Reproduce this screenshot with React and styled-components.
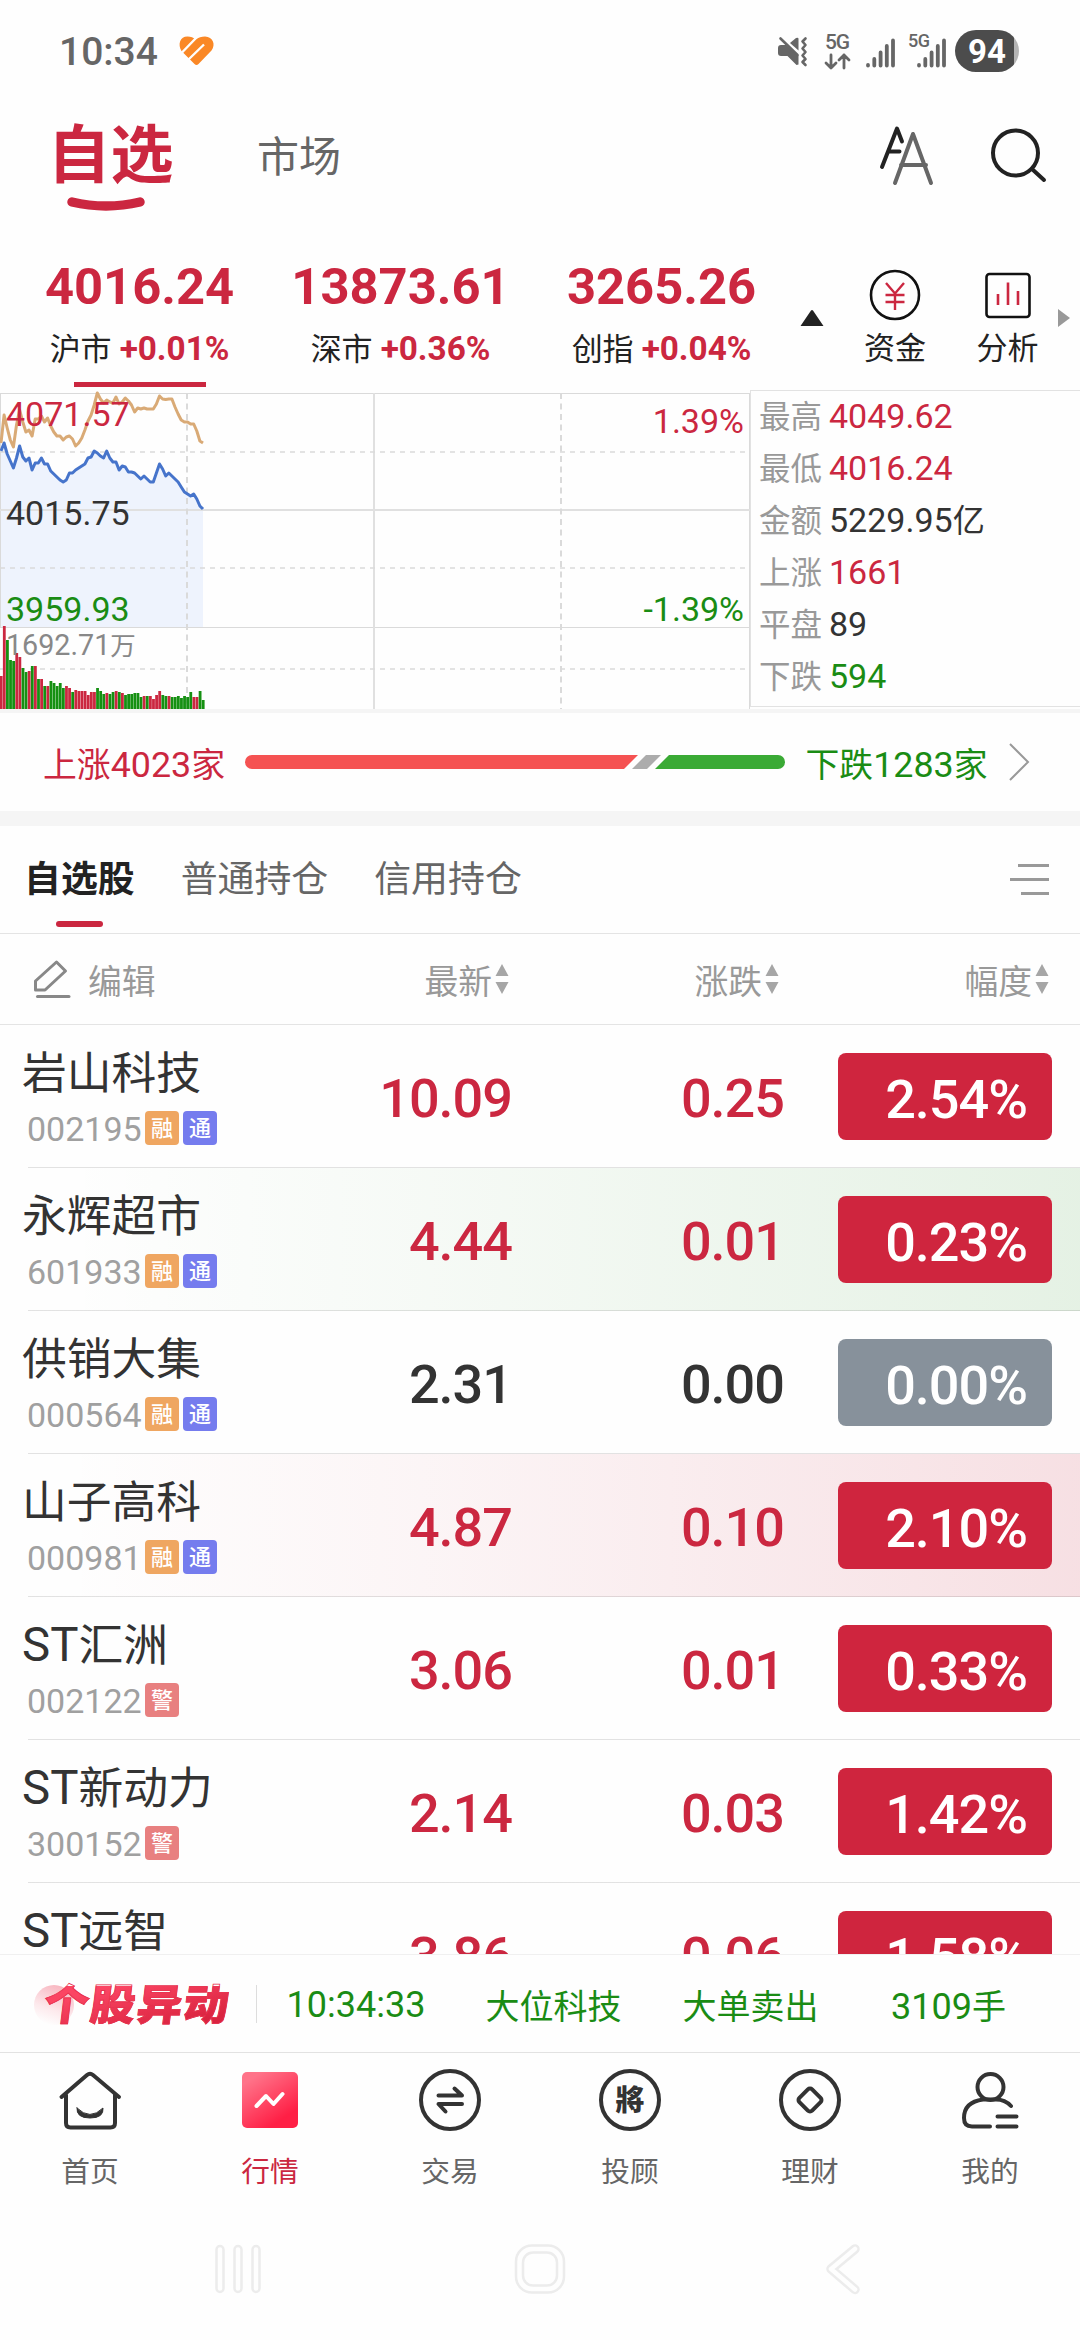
import React from 'react'
import styled, { createGlobalStyle } from 'styled-components'

const RED = '#cb2740'
const GREEN = '#1a8c14'

const GlobalStyle = createGlobalStyle`
  * {
    box-sizing: border-box;
  }
  body {
    margin: 0;
    background: #fefefe;
    font-family: Roboto, 'Noto Sans CJK SC', sans-serif;
    color: #333;
  }
  svg {
    display: block;
    flex: none;
    overflow: visible;
  }
`

const Screen = styled.div`
  width: 1080px;
  height: 2340px;
  display: flex;
  flex-direction: column;
  overflow: hidden;
  background: #fefefe;
`

// Chinese glyphs run slightly smaller than the digits next to them
const Cn = styled.span`
  font-size: 0.945em;
`

/* ---------- status bar ---------- */

const StatusBar = styled.header`
  height: 100px;
  flex: none;
  display: flex;
  align-items: center;
  padding: 1px 61px 0 59px;
`

const Clock = styled.span`
  width: 120px;
  font-size: 39px;
  font-weight: 500;
  line-height: 48px;
  padding-top: 2px;
  color: #666;
`

const StatusIcons = styled.div`
  margin-left: auto;
  display: flex;
  align-items: center;
`

const Battery = styled.span`
  width: 64px;
  height: 42px;
  margin-left: 7px;
  border-radius: 21px;
  background: linear-gradient(90deg, #4c4c4c 59px, #b5b5b5 59px);
  color: #fff;
  font-size: 33px;
  font-weight: 700;
  line-height: 43px;
  text-align: center;
`

const Network = styled.svg`
  margin-left: ${props => props.$gap}px;
`

/* ---------- top tabs ---------- */

const TopBar = styled.nav`
  height: 140px;
  flex: none;
  display: flex;
  padding: 0 33px 0 47px;
`

const MainTab = styled.div`
  width: 127px;
  display: flex;
  flex-direction: column;
  align-items: center;
  font-size: 63px;
  line-height: 90px;
  padding-top: 11px;
  font-weight: 700;
  color: ${RED};
  svg {
    margin: -5px 0 0 -9px;
  }
`

const SideTab = styled.div`
  margin-left: 83px;
  padding-top: 28px;
  font-size: 42px;
  line-height: 60px;
  color: #666;
`

const TopActions = styled.div`
  margin-left: auto;
  padding-top: 25px;
  display: flex;
  gap: 56px;
`

/* ---------- indices ---------- */

const Indices = styled.section`
  height: 150px;
  flex: none;
  display: flex;
  padding-left: 9px;
`

const IndexCell = styled.div`
  width: 261px;
  height: 150px;
  display: flex;
  flex-direction: column;
  align-items: center;
`

const IndexValue = styled.div`
  margin-top: 17px;
  height: 60px;
  line-height: 60px;
  font-size: 50.7px;
  font-weight: 700;
  color: ${RED};
`

const IndexLabel = styled.div`
  display: flex;
  align-items: baseline;
  gap: 8px;
  height: 40px;
  line-height: 40px;
  margin-top: 12px;
  font-size: 31px;
  color: #222;
  b {
    font-size: 33.3px;
    color: ${RED};
  }
`

const IndexMark = styled.div`
  width: 132px;
  height: 5px;
  margin-top: 13px;
  background: ${RED};
`

const Collapse = styled.svg`
  margin: 70px 0 0 8px;
`

const Tool = styled.div`
  width: ${props => props.$width}px;
  padding-top: 29px;
  display: flex;
  flex-direction: column;
  align-items: center;
  font-size: 31px;
  line-height: 40px;
  color: #222;
  svg {
    margin-bottom: 8px;
  }
`

const More = styled.svg`
  margin: 69px 0 0 9px;
`

/* ---------- chart ---------- */

const Market = styled.section`
  height: 323px;
  flex: none;
  display: flex;
  border-bottom: 4px solid #f5f5f5;
`

const Stats = styled.dl`
  margin: 0;
  width: 330px;
  height: 317px;
  border: 1px solid #e2e2e2;
  border-right: 0;
  padding-left: 8px;
`

const Stat = styled.div`
  display: flex;
  align-items: baseline;
  gap: 7px;
  height: 52px;
  line-height: 50px;
  dt {
    font-size: 31.5px;
    color: #999;
  }
  dd {
    margin: 0;
    font-size: 34px;
    color: ${props => props.$color};
  }
`

/* ---------- breadth ---------- */

const Breadth = styled.section`
  height: 113px;
  flex: none;
  display: flex;
  align-items: center;
  padding: 0 51px 0 43px;
  border-bottom: 15px solid #f5f5f5;
  font-size: 35.8px;
  color: ${RED};
`

const BreadthText = styled.span`
  width: ${props => props.$width}px;
  padding-left: ${props => props.$inset || 0}px;
  color: ${props => props.$color};
  white-space: nowrap;
`

/* ---------- watch list ---------- */

const ListTabs = styled.nav`
  height: 108px;
  flex: none;
  display: flex;
  padding: 0 31px 0 24px;
  border-bottom: 1px solid #e4e4e4;
`

const ListTab = styled.div`
  margin-right: 46px;
  padding-top: 26px;
  font-size: 36.9px;
  line-height: 56px;
  font-weight: ${props => (props.$active ? 700 : 400)};
  color: ${props => (props.$active ? '#222' : '#666')};
  &::after {
    content: '';
    display: ${props => (props.$active ? 'block' : 'none')};
    width: 47px;
    height: 6px;
    margin: 13px auto 0;
    border-radius: 3px;
    background: ${RED};
  }
`

const MenuIcon = styled.svg`
  margin: 37px 0 0 auto;
`

const ListHead = styled.div`
  height: 91px;
  flex: none;
  display: grid;
  grid-template-columns: 270px 239px 270px 270px;
  align-items: center;
  border-bottom: 1px solid #e4e4e4;
  font-size: 33.8px;
  color: #999;
`

const HeadCell = styled.div`
  display: flex;
  align-items: center;
  justify-content: flex-end;
  gap: 3px;
`

const EditCell = styled(HeadCell)`
  justify-content: flex-start;
  padding-left: 33px;
  gap: 17px;
`

const List = styled.section`
  height: 929px;
  flex: none;
  overflow: hidden;
`

const flash = {
  up: 'linear-gradient(90deg, rgba(203, 39, 64, 0) 6%, rgba(203, 39, 64, 0.045) 40%, rgba(203, 39, 64, 0.14))',
  down: 'linear-gradient(90deg, rgba(26, 140, 20, 0) 6%, rgba(26, 140, 20, 0.035) 40%, rgba(26, 140, 20, 0.11))',
  none: 'none',
}

const Row = styled.div`
  height: 143px;
  display: grid;
  grid-template-columns: 270px 242px 272px 54px 214px;
  align-items: center;
  background: linear-gradient(rgba(0, 0, 0, 0.11), rgba(0, 0, 0, 0.11)) 28px 142px / 1052px 1px no-repeat,
    ${props => flash[props.$flash]};
`

const Stock = styled.div`
  padding-left: 22px;
  height: 143px;
`

const StockName = styled.div`
  margin-top: 18px;
  height: 60px;
  line-height: 60px;
  font-size: 47.4px;
  white-space: nowrap;
  color: #333;
`

const StockCode = styled.div`
  display: flex;
  align-items: center;
  height: 34px;
  margin-top: 8px;
  padding-left: 5px;
  font-size: 34px;
  color: #a0a0a0;
  span {
    width: 118px;
    padding-top: 2px;
  }
`

const tagColors = { 融: '#efa661', 通: '#757cee', 警: '#e88080' }

const Tag = styled.i`
  width: 34px;
  height: 34px;
  margin-right: 4px;
  border-radius: 4px;
  background: ${props => tagColors[props.$kind]};
  color: #fff;
  font-style: normal;
  font-weight: 500;
  font-size: 22px;
  line-height: 35px;
  text-align: center;
`

const Figure = styled.div`
  text-align: right;
  font-size: 54px;
  font-weight: 500;
  letter-spacing: -1px;
  line-height: 60px;
  padding-top: 5px;
  color: ${props => (props.$flat ? '#333' : RED)};
`

const Percent = styled.div`
  grid-column: 5;
  height: 87px;
  padding-right: 25px;
  border-radius: 8px;
  background: ${props => (props.$flat ? '#87919b' : '#cf253e')};
  color: #fff;
  font-size: 54px;
  font-weight: 500;
  letter-spacing: -1px;
  line-height: 93px;
  text-align: right;
`

/* ---------- ticker ---------- */

const Ticker = styled.section`
  height: 99px;
  flex: none;
  display: flex;
  align-items: center;
  border-top: 1px solid #f0f0f0;
  border-bottom: 1px solid #e2e2e2;
  font-size: 36px;
  color: ${GREEN};
`

const TickerLogo = styled.div`
  position: relative;
  width: 223px;
  height: 38px;
  padding-left: 10px;
  margin-left: 34px;
  border-right: 1px solid #ddd;
  &::before {
    content: '';
    position: absolute;
    left: 0;
    top: 0;
    width: 40px;
    height: 40px;
    border-radius: 50%;
    background: linear-gradient(200deg, #f8b6c0 10%, rgba(252, 225, 229, 0.7) 60%, rgba(255, 255, 255, 0) 90%);
  }
`

const LogoText = styled.span`
  position: relative;
  display: block;
  width: 190px;
  font-size: 45px;
  font-weight: 900;
  line-height: 42px;
  letter-spacing: 1.6px;
  white-space: nowrap;
  transform: skewX(-7deg) scaleY(0.95);
  color: transparent;
  background: linear-gradient(165deg, #fb4563 20%, #d9233f 85%);
  background-clip: text;
  -webkit-background-clip: text;
  -webkit-text-stroke: 0.8px #e6304d;
`

const TickerItem = styled.span`
  width: ${props => props.$width}px;
  padding-top: 2px;
  text-align: center;
`

/* ---------- bottom ---------- */

const TabBar = styled.nav`
  height: 147px;
  flex: none;
  display: grid;
  grid-template-columns: repeat(6, 180px);
`

const TabItem = styled.div`
  display: flex;
  flex-direction: column;
  align-items: center;
  padding-top: 16px;
  font-size: 28.7px;
  line-height: 40px;
  color: ${props => (props.$active ? RED : '#666')};
  svg {
    margin-bottom: 21px;
  }
`

const SystemBar = styled.footer`
  flex: 1;
  display: flex;
  justify-content: space-between;
  padding: 44px 219px 0 214px;
  svg:nth-child(2) {
    margin-right: 7px;
  }
`

/* ---------- data ---------- */

// one sample every three pixels, y measured from the top of the chart
const price = [
  58, 50, 61, 68, 75, 65, 53, 64, 68, 65, 77, 70, 70, 65, 71, 71, 78, 81, 84, 87, 89, 87, 80, 80, 77, 75, 73, 71, 65,
  64, 58, 60, 63, 65, 58, 65, 69, 69, 77, 73, 74, 79, 79, 80, 83, 86, 83, 86, 89, 89, 80, 71, 76, 83, 80, 83, 86, 89,
  94, 99, 101, 103, 101, 106, 113, 116,
]
const average = [
  50, 22, 35, 47, 54, 32, 17, 29, 39, 37, 43, 26, 26, 23, 29, 25, 33, 39, 43, 43, 47, 44, 43, 46, 53, 50, 45, 37, 28,
  22, 12, 0, 6, 10, 7, 9, 10, 4, 11, 9, 5, 8, 12, 19, 15, 16, 15, 16, 16, 16, 11, 3, 6, 6.5, 6, 6, 14, 21, 27, 29, 29,
  31, 31, 38, 48, 50,
]
const volume = [
  33, 83, 69, 49, 48, 56, 52, 41, 37, 38, 43, 43, 30, 30, 23, 23, 28, 26, 23, 26, 21, 23, 21, 17, 19, 18, 18, 18, 14,
  17, 17, 21, 18, 15, 16, 15, 17, 18, 17, 16, 14, 15, 15, 16, 16, 12, 13, 13, 13, 10, 14, 18, 14, 13, 13, 12, 12, 13,
  11, 13, 12, 17, 12, 12, 18, 9,
]
const volumeSide = 'rrgggrrggrgrgrgrggggg' + 'rrgrrrrrrrgggrggrgrggggggrgrrrrggrgggggggrrgg'

const px = i => 1 + (i * 202) / (price.length - 1)
const toPoints = data => data.map((y, i) => `${px(i).toFixed(1)},${y + 3}`).join(' ')

const stats = [
  ['最高', '4049.62', RED],
  ['最低', '4016.24', RED],
  ['金额', '5229.95', '#333', '亿'],
  ['上涨', '1661', RED],
  ['平盘', '89', '#333'],
  ['下跌', '594', GREEN],
]

const indices = [
  ['4016.24', '沪市', '+0.01%'],
  ['13873.61', '深市', '+0.36%'],
  ['3265.26', '创指', '+0.04%'],
]

const stocks = [
  { name: '岩山科技', code: '002195', tags: '融通', last: '10.09', diff: '0.25', pct: '2.54%' },
  { name: '永辉超市', code: '601933', tags: '融通', last: '4.44', diff: '0.01', pct: '0.23%', flash: 'down' },
  { name: '供销大集', code: '000564', tags: '融通', last: '2.31', diff: '0.00', pct: '0.00%', flat: true },
  { name: '山子高科', code: '000981', tags: '融通', last: '4.87', diff: '0.10', pct: '2.10%', flash: 'up' },
  { st: true, name: '汇洲', code: '002122', tags: '警', last: '3.06', diff: '0.01', pct: '0.33%' },
  { st: true, name: '新动力', code: '300152', tags: '警', last: '2.14', diff: '0.03', pct: '1.42%' },
  { st: true, name: '远智', last: '3.86', diff: '0.06', pct: '1.58%' },
]

/* ---------- drawings ---------- */

const HeartIcon = () => (
  <svg width="36" height="32" viewBox="0 0 36 32">
    <path
      d="M15.500 29L2.500 16C-1.500 9.500 1 1.500 8.500 1.500C12 1.500 14.500 2.500 16.500 4.500C19.500 2.500 22.500 1.500 26 1.500C34 2 37 9.500 32.500 15.500L19.500 29Q17.500 31 15.500 29Z"
      fill="#fa8826"
    />
    <path d="M3 17.500L18 2M9.500 24.500L25 9.500" stroke="#fefefe" strokeWidth="2.400" />
    <path d="M1 17L13 30L9 31L0 22Z" fill="#fefefe" />
  </svg>
)

const MuteIcon = () => (
  <svg width="30" height="32" viewBox="0 0 30 32" fill="#666">
    <path d="M3 10H8L20.500 20.500V29.500L18.500 30L9.500 21H3Q0 21 0 18V13Q0 10 3 10Z" />
    <path d="M12 8L18 3Q20.500 2 20.500 4V15.500Z" />
    <path d="M2.500 3.500L19.500 20" stroke="#666" strokeWidth="2.600" strokeLinecap="round" />
    <path d="M27.500 3.500L24.500 6.500L27.500 10L24.500 13.500L27.500 17L24.500 20.500L27.500 24L24.500 27L27.500 30" fill="none" stroke="#666" strokeWidth="2.600" strokeLinecap="round" strokeLinejoin="round" />
  </svg>
)

const bars = x => (
  <g stroke="#666" strokeWidth="3.800" strokeLinecap="round">
    <path d={`M${x + 2} 32V32.500M${x + 8.3} 26V32.500M${x + 14.6} 19.500V32.500M${x + 20.8} 13V32.500M${x + 27} 7.500V32.500`} />
  </g>
)

const DataIcon = () => (
  <Network $gap={17} width="26" height="38" viewBox="0 0 26 38">
    <text x="0" y="17" fontSize="21" fontWeight="500" fill="#666" textLength="25">5G</text>
    <path d="M6 23V36M1 31L6 36L11 31M19 36V23M14 28L19 23L24 28" fill="none" stroke="#666" strokeWidth="2.800" strokeLinecap="round" strokeLinejoin="round" />
  </Network>
)

const FontIcon = () => (
  <svg width="56" height="60" viewBox="0 0 56 60" fill="none" strokeWidth="4" strokeLinecap="round" strokeLinejoin="round">
    <path d="M3 42L18 3.500L23 16.500M10.500 26.500H20.500" stroke="#222" />
    <path d="M16 58L34 9L52 58M22 40H47" stroke="#666" />
  </svg>
)

const SearchIcon = () => (
  <svg width="56" height="60" viewBox="0 0 56 60" fill="none" stroke="#222" strokeWidth="4" strokeLinecap="round">
    <circle cx="24.500" cy="28" r="22.500" />
    <path d="M41 44L53 55" />
  </svg>
)

const MoneyIcon = () => (
  <svg width="52" height="52" viewBox="0 0 52 52" fill="none">
    <circle cx="26" cy="26" r="24" stroke="#111" strokeWidth="2.600" />
    <path d="M17 14L26 24.500L35 14M16.500 26H35.500M16.500 33H35.500M26 24.500V41" stroke={RED} strokeWidth="2.400" />
  </svg>
)

const AnalysisIcon = () => (
  <svg width="52" height="52" viewBox="0 0 52 52" fill="none">
    <rect x="4.500" y="5" width="43" height="43" rx="3" stroke="#111" strokeWidth="2.600" />
    <path d="M16 25V36M26 13.500V36M36 22V36" stroke={RED} strokeWidth="2.600" />
  </svg>
)

const PencilIcon = () => (
  <svg width="38" height="40" viewBox="0 0 38 40" fill="none" stroke="#888" strokeWidth="3" strokeLinejoin="round" strokeLinecap="round">
    <path d="M2.500 22L23.500 3L32.500 12L12 31H2.500Z" />
    <path d="M4.500 37.500H36" />
  </svg>
)

const SortIcon = () => (
  <svg width="14" height="30" viewBox="0 0 14 30" fill="#a6a6a6">
    <path d="M7 0L13.500 12H.5ZM7 30L13.500 18H.5Z" />
  </svg>
)

const navIcons = {
  首页: (
    <g>
      <path d="M2.500 28L28 6Q31 3.500 34 6L60 28M7 26V54Q7 58.500 11.500 58.500H51.500Q56 58.500 56 54V26" />
      <path d="M18 39Q31 52 44 39Q45 49 31 49Q17 49 18 39Z" fill="#333" strokeWidth="1" />
    </g>
  ),
  行情: (
    <g stroke="none">
      <defs>
        <linearGradient id="hot" x1="0.2" y1="0.1" x2="0.7" y2="0.85">
          <stop offset="0" stopColor="#ff7389" />
          <stop offset="1" stopColor="#ff1f45" />
        </linearGradient>
      </defs>
      <rect x="3" y="3" width="56" height="56" rx="5" fill="url(#hot)" />
      <path d="M17.500 37L27 27L34.500 35L43.500 25" fill="none" stroke="#fff" strokeWidth="4" strokeLinecap="round" strokeLinejoin="round" />
    </g>
  ),
  交易: (
    <g>
      <circle cx="31" cy="31" r="29" />
      <path d="M19.500 26.500H43L35.500 19.500M43 35H19.500L26.500 42.500" />
    </g>
  ),
  投顾: (
    <g>
      <circle cx="31" cy="31" r="29" />
      <text x="31" y="41.500" fontSize="29" fontWeight="900" textAnchor="middle" fill="#333" stroke="none">將</text>
    </g>
  ),
  理财: (
    <g>
      <circle cx="31" cy="31" r="29" />
      <rect x="22" y="22" width="18" height="18" rx="3" transform="rotate(45 31 31)" />
    </g>
  ),
  我的: (
    <g>
      <circle cx="31.500" cy="18" r="13" />
      <path d="M52 37Q46 30.500 37 30.500H24Q5 33 5 49Q5 57.500 13 57.500H31M38.500 47.500H57.500M38.500 57.500H57.500" />
    </g>
  ),
}

const MarketChart = () => (
  <svg width="750" height="319" viewBox="0 0 750 319" fontSize="34">
    <polygon points={`0,237 ${toPoints(price)} 203,237`} fill="#eef3fd" />
    <g stroke="#dadada" fill="none">
      <path d="M0 3.500H750M0 237.500H750M749.500 3V319M.5 3V237" />
      <path d="M0 120H750M374 3V319" strokeWidth="2" stroke="#e0e0e0" />
      <path d="M0 62H745M0 178H745M0 279H745" strokeWidth="1.600" strokeDasharray="5 5" />
      <path d="M187 3V319M561 3V319" strokeWidth="2" strokeDasharray="6 4.500" />
    </g>
    <polyline points={toPoints(average)} fill="none" stroke="#d9aa76" strokeWidth="3" strokeLinejoin="round" />
    <polyline points={toPoints(price)} fill="none" stroke="#4674cb" strokeWidth="3" strokeLinejoin="round" />
    {volume.map((h, i) => (
      <rect key={i} x={px(i) - 1.2} y={319 - h} width="2.800" height={h} fill={volumeSide[i] === 'r' ? RED : '#159012'} />
    ))}
    <text x="6" y="36" fill={RED}>4071.57</text>
    <text x="6" y="135" fill="#333">4015.75</text>
    <text x="6" y="231" fill={GREEN}>3959.93</text>
    <text x="6" y="265" fontSize="28.700" fill="#888">1692.71<tspan fontSize="25.500">万</tspan></text>
    <text x="744" y="43" textAnchor="end" fill={RED}>1.39%</text>
    <text x="744" y="231" textAnchor="end" fill={GREEN}>-1.39%</text>
  </svg>
)

const App = () => (
  <Screen>
    <GlobalStyle />
    <StatusBar>
      <Clock>10:34</Clock>
      <HeartIcon />
      <StatusIcons>
        <MuteIcon />
        <DataIcon />
        <Network $gap={15} width="31" height="36" viewBox="0 0 31 36">{bars(0)}</Network>
        <Network $gap={11} width="40" height="36" viewBox="0 0 40 36">
          <text x="0" y="14" fontSize="18" fontWeight="500" fill="#666" textLength="22">5G</text>
          {bars(9)}
        </Network>
        <Battery>94</Battery>
      </StatusIcons>
    </StatusBar>

    <TopBar>
      <MainTab>
        自选
        <svg width="80" height="16" viewBox="0 0 80 16">
          <path d="M6 6Q40 14 74 6" fill="none" stroke={RED} strokeWidth="9.500" strokeLinecap="round" />
        </svg>
      </MainTab>
      <SideTab>市场</SideTab>
      <TopActions>
        <FontIcon />
        <SearchIcon />
      </TopActions>
    </TopBar>

    <Indices>
      {indices.map(([value, label, change], i) => (
        <IndexCell key={label}>
          <IndexValue>{value}</IndexValue>
          <IndexLabel>
            {label}
            <b>{change}</b>
          </IndexLabel>
          {i === 0 && <IndexMark />}
        </IndexCell>
      ))}
      <Collapse width="24" height="16" viewBox="0 0 24 16">
        <path d="M12 0Q13 0 14 2L23.500 16H.5L10 2Q11 0 12 0Z" fill="#222" />
      </Collapse>
      <Tool $width={142}>
        <MoneyIcon />
        资金
      </Tool>
      <Tool $width={83}>
        <AnalysisIcon />
        分析
      </Tool>
      <More width="12" height="18" viewBox="0 0 12 18">
        <path d="M0 0L12 9L0 18Z" fill="#999" />
      </More>
    </Indices>

    <Market>
      <MarketChart />
      <Stats>
        {stats.map(([label, value, color, unit]) => (
          <Stat key={label} $color={color}>
            <dt>{label}</dt>
            <dd>
              {value}
              {unit && <Cn>{unit}</Cn>}
            </dd>
          </Stat>
        ))}
      </Stats>
    </Market>

    <Breadth>
      <BreadthText $width={202} $color={RED}>
        <Cn>上涨</Cn>4023<Cn>家</Cn>
      </BreadthText>
      <svg width="540" height="14" viewBox="0 0 540 14">
        <path d="M7 0H393L379 14H7A7 7 0 0 1 7 0Z" fill="#f55252" />
        <path d="M401 0H416L402 14H387Z" fill="#acacac" />
        <path d="M424 0H533A7 7 0 0 1 533 14H410Z" fill="#3aaa35" />
      </svg>
      <BreadthText $width={225} $inset={21} $color={GREEN}>
        <Cn>下跌</Cn>1283<Cn>家</Cn>
      </BreadthText>
      <svg width="20" height="38" viewBox="0 0 20 38">
        <path d="M1 1L19 19L1 37" fill="none" stroke="#999" strokeWidth="2" />
      </svg>
    </Breadth>

    <ListTabs>
      <ListTab $active>自选股</ListTab>
      <ListTab>普通持仓</ListTab>
      <ListTab>信用持仓</ListTab>
      <MenuIcon width="39" height="34" viewBox="0 0 39 34">
        <path d="M8 2.500H39M0 16.500H39M11 30.500H39" stroke="#999" strokeWidth="3" />
      </MenuIcon>
    </ListTabs>

    <ListHead>
      <EditCell>
        <PencilIcon />
        编辑
      </EditCell>
      {['最新', '涨跌', '幅度'].map(label => (
        <HeadCell key={label}>
          {label}
          <SortIcon />
        </HeadCell>
      ))}
    </ListHead>

    <List>
      {stocks.map(stock => (
        <Row key={stock.name} $flash={stock.flash || 'none'}>
          <Stock>
            <StockName>
              {stock.st && 'ST'}
              <Cn>{stock.name}</Cn>
            </StockName>
            {stock.code && (
              <StockCode>
                <span>{stock.code}</span>
                {stock.tags.split('').map(tag => (
                  <Tag key={tag} $kind={tag}>{tag}</Tag>
                ))}
              </StockCode>
            )}
          </Stock>
          <Figure $flat={stock.flat}>{stock.last}</Figure>
          <Figure $flat={stock.flat}>{stock.diff}</Figure>
          <Percent $flat={stock.flat}>{stock.pct}</Percent>
        </Row>
      ))}
    </List>

    <Ticker>
      <TickerLogo>
        <LogoText>个股异动</LogoText>
      </TickerLogo>
      <TickerItem $width={198}>10:34:33</TickerItem>
      <TickerItem $width={197}><Cn>大位科技</Cn></TickerItem>
      <TickerItem $width={197}><Cn>大单卖出</Cn></TickerItem>
      <TickerItem $width={199}>3109<Cn>手</Cn></TickerItem>
    </Ticker>

    <TabBar>
      {Object.keys(navIcons).map(label => (
        <TabItem key={label} $active={label === '行情'}>
          <svg width="62" height="62" viewBox="0 0 62 62" fill="none" stroke="#333" strokeWidth="4" strokeLinecap="round" strokeLinejoin="round">
            {navIcons[label]}
          </svg>
          {label}
        </TabItem>
      ))}
    </TabBar>

    <SystemBar>
      <svg width="48" height="50" viewBox="0 0 48 50" fill="none" stroke="#ececec" strokeWidth="2.500">
        <rect x="2.500" y="2" width="7" height="46" rx="3.500" />
        <rect x="20.500" y="2" width="7" height="46" rx="3.500" />
        <rect x="38.500" y="2" width="7" height="46" rx="3.500" />
      </svg>
      <svg width="52" height="50" viewBox="0 0 52 50" fill="none" stroke="#ececec" strokeWidth="2.500">
        <rect x="2" y="1.500" width="48" height="47" rx="16" />
        <rect x="9" y="8.500" width="34" height="33" rx="10" />
      </svg>
      <svg width="36" height="50" viewBox="0 0 36 50" fill="none" strokeLinecap="round" strokeLinejoin="round">
        <path d="M30 5L6 25L30 45.500" stroke="#ececec" strokeWidth="9.500" />
        <path d="M30 5L6 25L30 45.500" stroke="#fefefe" strokeWidth="4.500" />
      </svg>
    </SystemBar>
  </Screen>
)

export default App
